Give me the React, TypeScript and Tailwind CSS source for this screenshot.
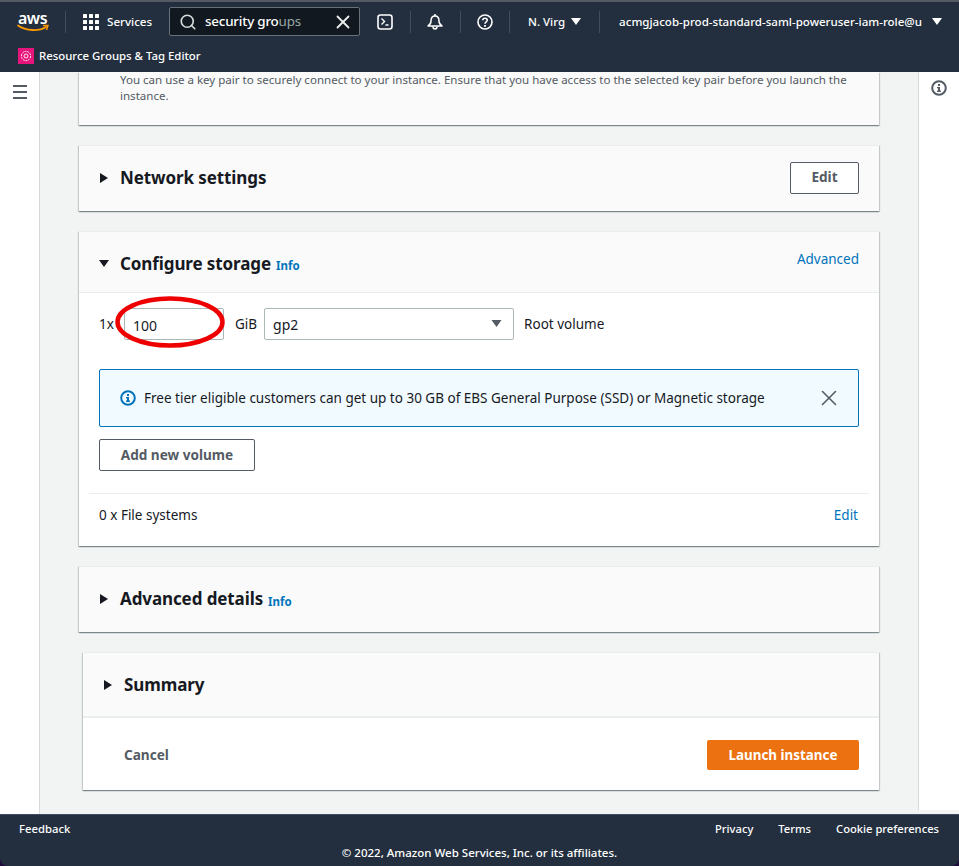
import { X, Search } from "lucide-react"

const font = "font-['Noto_Sans','Open_Sans',sans-serif]"

type CaretProps = { open?: boolean, className?: string }

const Caret = ({ open, className }: CaretProps) => (
  <svg width="10" height="10" viewBox="0 0 10 10" className={className}>
    {open
      ? <polygon points="0,1 10,1 5,8" fill="currentColor" />
      : <polygon points="1,0 9,5 1,10" fill="currentColor" />}
  </svg>
)

const InfoCircle = ({ color, size }: { color: string, size: number }) => (
  <svg width={size} height={size} viewBox="0 0 16 16" fill="none">
    <circle cx="8" cy="8" r="6.8" stroke={color} strokeWidth="2" />
    <rect x="7" y="7" width="2" height="4.5" fill={color} />
    <rect x="6" y="10.5" width="4" height="1.4" fill={color} />
    <rect x="6" y="7" width="2" height="1.3" fill={color} />
    <rect x="7" y="4" width="2" height="2" fill={color} />
  </svg>
)

const Divider = () => <div className="w-px h-[22px] bg-[#414d5c]" />

const Header = () => (
  <div className="h-[72px] shrink-0 bg-[#232f3e] border-t-[2px] border-[#545b64] text-white flex flex-col">
    <div className="h-[38px] flex items-center pt-[1px]">
      <div className="w-[65px] shrink-0 pl-[17px] relative">
        <div className="text-[16px] leading-[14px] font-semibold tracking-[-0.5px] text-white pl-[1px]">aws</div>
        <svg width="32" height="8" viewBox="0 0 32 8" fill="none" className="-mt-[1px]">
          <path d="M1 1.5 C9 7 22 7.5 29 3" stroke="#f90" strokeWidth="1.8" strokeLinecap="round" />
          <path d="M26 1.5 L31 1.5 L29.5 6" stroke="#f90" strokeWidth="1.4" fill="none" />
        </svg>
      </div>
      <Divider />
      <div className="grid grid-cols-3 gap-[2px] ml-[17px] w-[16px] h-[16px]">
        {[0, 1, 2, 3, 4, 5, 6, 7, 8].map((i) => (
          <div key={i} className="bg-white w-[4px] h-[4px] rounded-[0.5px]" />
        ))}
      </div>
      <span className="text-[11.6px] font-medium ml-[8px] w-[62px]">Services</span>
      <div className="w-[191px] h-[29px] bg-[#12181f] border border-[#687078] rounded-[2px] flex items-center pl-[9px] pr-[5px]">
        <Search size={18} className="text-[#d5dbdb]" strokeWidth={2.2} />
        <span className="ml-[8px] text-[13.4px] tracking-[-0.2px] font-medium">security gro<span className="text-[#95a5a6] font-normal">ups</span></span>
        <X size={22} className="ml-auto text-[#eaeded]" strokeWidth={2} />
      </div>
      <svg width="16" height="16" viewBox="0 0 16 16" fill="none" className="ml-[17px]">
        <rect x="1" y="1" width="14" height="14" rx="2.5" stroke="white" strokeWidth="1.6" />
        <path d="M4.5 4.5 L7.5 7.5 L4.5 10.5 M8.5 11 H11.5" stroke="white" strokeWidth="1.4" />
      </svg>
      <div className="w-px h-[22px] bg-[#414d5c] ml-[17px]" />
      <svg width="18" height="18" viewBox="0 0 18 18" fill="none" className="ml-[15px]">
        <path d="M2 13 C4.5 11.5 5 10 5 8 C5 5 6.5 3 9 3 C11.5 3 13 5 13 8 C13 10 13.5 11.5 16 13 Z" stroke="white" strokeWidth="1.5" strokeLinejoin="round" />
        <path d="M9 1 V3 M7 13.5 C7 16.8 11 16.8 11 13.5" stroke="white" strokeWidth="1.5" />
      </svg>
      <div className="w-px h-[22px] bg-[#414d5c] ml-[16px]" />
      <svg width="16" height="16" viewBox="0 0 16 16" fill="none" className="ml-[16px]">
        <circle cx="8" cy="8" r="7" stroke="white" strokeWidth="1.6" />
        <path d="M5.8 6.2 C5.8 3.6 10.2 3.6 10.2 6.2 C10.2 7.8 8 7.8 8 9.8" stroke="white" strokeWidth="1.6" fill="none" />
        <rect x="7.1" y="11" width="1.8" height="1.8" fill="white" />
      </svg>
      <div className="w-px h-[22px] bg-[#414d5c] ml-[16px]" />
      <span className="text-[11.5px] font-medium ml-[18px]">N. Virg</span>
      <Caret open className="ml-[6px] text-white" />
      <div className="w-px h-[22px] bg-[#414d5c] ml-[18px]" />
      <span className="text-[11.55px] font-medium ml-[19px] whitespace-nowrap">acmgjacob-prod-standard-saml-poweruser-iam-role@u</span>
      <Caret open className="ml-[10px] text-white" />
    </div>
    <div className="flex-1 flex items-center pl-[18px]">
      <div className="w-4 h-4 bg-[#e7157b] flex items-center justify-center">
        <svg width="12" height="12" viewBox="0 0 12 12" fill="none">
          <circle cx="6" cy="6" r="4.6" stroke="white" strokeWidth="0.9" strokeDasharray="2 0.8" />
          <circle cx="6" cy="6" r="2" stroke="white" strokeWidth="0.9" />
        </svg>
      </div>
      <span className="text-[11.4px] font-medium ml-[5px]">Resource Groups &amp; Tag Editor</span>
    </div>
  </div>
)

const cardBase = "shadow-[0_1px_1px_0_rgba(0,28,36,0.3),1px_1px_1px_0_rgba(0,28,36,0.15),-1px_1px_1px_0_rgba(0,28,36,0.15)] border-t border-[#eaeded]"

const OutlineButton = ({ label, width }: { label: string, width: string }) => (
  <button className={`h-[32px] ${width} border border-[#545b64] rounded-[2px] bg-white text-[#545b64] text-[13.6px] font-bold flex items-center justify-center`}>
    {label}
  </button>
)

const SectionHead = ({ title, info }: { title: string, info?: boolean }) => (
  <div className="flex items-center">
    <Caret className="text-[#16191f] mr-[11px]" />
    <span className="text-[17px] font-bold tracking-[-0.1px] text-[#16191f]">{title}</span>
    {info && <span className="text-[11.5px] font-bold text-[#0073bb] ml-[5px] mt-[6px]">Info</span>}
  </div>
)

const Storage = () => (
  <div className={`${cardBase} bg-white mt-[20px] h-[315px] relative`}>
    <div className="h-[61px] bg-[#fafafa] border-b border-[#eaeded] flex justify-between pl-[20px] pr-[20px]">
      <div className="flex items-center pt-[3px]">
        <Caret open className="text-[#16191f] mr-[11px]" />
        <span className="text-[17px] font-bold tracking-[-0.1px] text-[#16191f]">Configure storage</span>
        <span className="text-[11.5px] font-bold text-[#0073bb] ml-[5px] mt-[4px]">Info</span>
      </div>
      <span className="text-[13.5px] text-[#0073bb] mt-[17px]">Advanced</span>
    </div>

    <div className="px-[20px] pt-[15px]">
      <div className="flex items-center text-[13.5px] text-[#16191f]">
        <span className="w-[25px]">1x</span>
        <div className="w-[100px] h-[32px] border border-[#aab7b8] rounded-[2px] flex items-center pl-[8px] pt-[2px] text-[14px]">100</div>
        <span className="ml-[11px]">GiB</span>
        <div className="ml-[7px] w-[250px] h-[32px] border border-[#aab7b8] rounded-[2px] flex items-center justify-between pl-[8px] pr-[11px] text-[14px]">
          gp2
          <Caret open className="text-[#545b64] w-[11px]" />
        </div>
        <span className="ml-[10px]">Root volume</span>
      </div>

      <div className="mt-[29px] h-[58px] bg-[#f1faff] border border-[#0073bb] rounded-[2px] flex items-center pl-[20px] pr-[16px]">
        <InfoCircle color="#0073bb" size={16} />
        <span className="ml-[8px] text-[13.5px] text-[#16191f] whitespace-nowrap">Free tier eligible customers can get up to 30 GB of EBS General Purpose (SSD) or Magnetic storage</span>
        <X size={26} className="ml-auto text-[#545b64]" strokeWidth={1.5} />
      </div>

      <div className="mt-[12px]">
        <OutlineButton label="Add new volume" width="w-[156px]" />
      </div>
    </div>

    <div className="mx-[10px] mt-[22px] border-t border-[#eaeded] flex items-center justify-between h-[44px] px-[10px] text-[13.5px]">
      <span className="text-[#16191f]">0 x File systems</span>
      <span className="text-[#0073bb] mr-[1px]">Edit</span>
    </div>

    <svg width="110" height="52" viewBox="0 0 110 52" fill="none" className="absolute left-[36px] top-[64px]">
      <ellipse cx="55" cy="26" rx="52.5" ry="23.5" stroke="#ee0000" strokeWidth="4.5" />
    </svg>
  </div>
)

const Footer = () => (
  <div className="h-[52px] shrink-0 bg-[#232f3e] border-t border-[#414d5c] rounded-b-[8px] text-white text-[11.5px] font-medium relative">
    <div className="flex justify-between pl-[19px] pr-[20px] pt-[5px] leading-[17px]">
      <span className="text-[11.3px] leading-[17px]">Feedback</span>
      <div className="flex gap-[25px] text-[11.2px] leading-[17px]">
        <span>Privacy</span>
        <span>Terms</span>
        <span>Cookie preferences</span>
      </div>
    </div>
    <div className="text-center pt-[7px] leading-[17px]">© 2022, Amazon Web Services, Inc. or its affiliates.</div>
  </div>
)

export default function App() {
  return (
    <div className={`${font} w-[959px] h-[866px] overflow-hidden flex flex-col bg-[#1d0b3a] antialiased`}>
      <Header />
      <div className="flex-1 flex min-h-0 bg-[#f2f3f3]">
        <div className="w-[40px] shrink-0 bg-white border-r border-[#d5dbdb] flex justify-center pt-[13px]">
          <div className="flex flex-col gap-[4px]">
            <div className="w-[14px] h-[2px] bg-[#545b64]" />
            <div className="w-[14px] h-[2px] bg-[#545b64]" />
            <div className="w-[14px] h-[2px] bg-[#545b64]" />
          </div>
        </div>

        <div className="flex-1 min-w-0 pl-[39px] pr-[39px]">
          <div className={`${cardBase} bg-[#fafafa] h-[53px] border-t-0 pl-[41px] pr-[20px] text-[11.55px] leading-[16px] text-[#545b64]`}>
            <p>You can use a key pair to securely connect to your instance. Ensure that you have access to the selected key pair before you launch the instance.</p>
          </div>

          <div className={`${cardBase} bg-[#fafafa] mt-[20px] h-[66px] pb-[2px] flex items-center justify-between pl-[20px] pr-[20px]`}>
            <SectionHead title="Network settings" />
            <OutlineButton label="Edit" width="w-[69px]" />
          </div>

          <Storage />

          <div className={`${cardBase} bg-[#fafafa] mt-[20px] h-[66px] pb-[2px] flex items-center pl-[20px]`}>
            <SectionHead title="Advanced details" info />
          </div>

          <div className={`${cardBase} bg-white mt-[20px] ml-[4px] h-[138px]`}>
            <div className="h-[65px] bg-[#fafafa] border-b-[2px] border-[#eaeded] flex items-center pl-[20px]">
              <SectionHead title="Summary" />
            </div>
            <div className="flex items-center justify-between pl-[41px] pr-[20px] pt-[22px]">
              <span className="text-[13.6px] font-bold text-[#545b64]">Cancel</span>
              <button className="w-[152px] h-[30px] bg-[#ec7211] rounded-[2px] text-white text-[13.4px] font-bold">Launch instance</button>
            </div>
          </div>
        </div>

        <div className="w-[41px] shrink-0 flex flex-col">
          <div className="h-[738px] bg-white border-l border-[#d5dbdb] flex justify-center pt-[8px]">
            <InfoCircle color="#545b64" size={16} />
          </div>
        </div>
      </div>
      <Footer />
    </div>
  )
}
